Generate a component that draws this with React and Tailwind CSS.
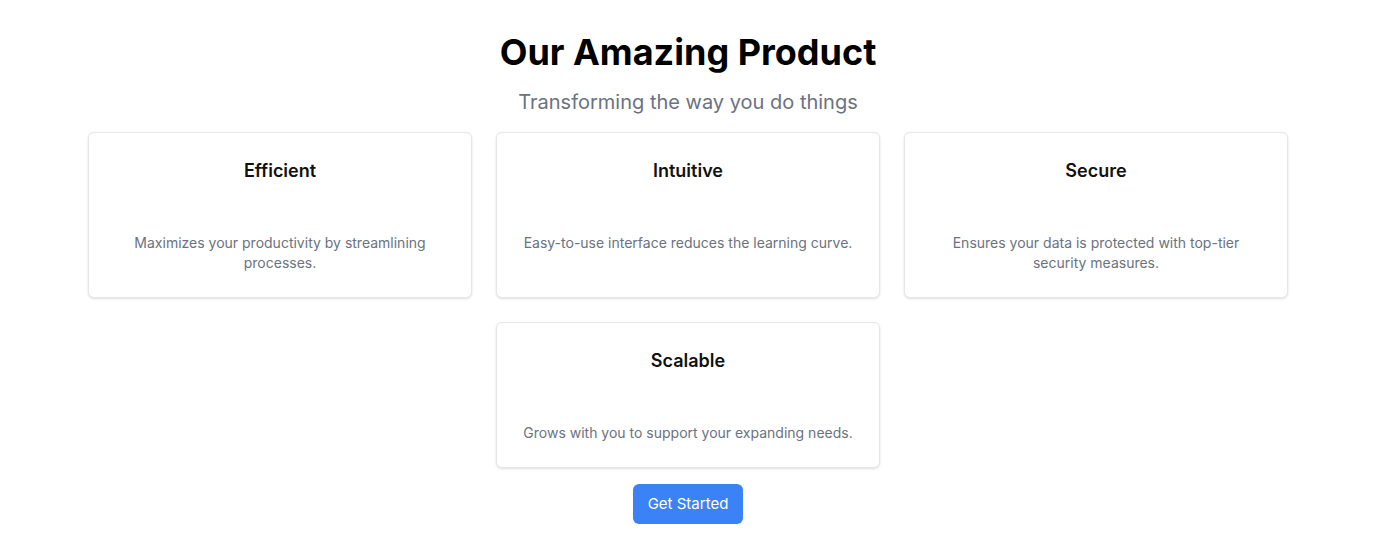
import React from 'react';

const features = [
  { title: 'Efficient', text: 'Maximizes your productivity by streamlining processes.' },
  { title: 'Intuitive', text: 'Easy-to-use interface reduces the learning curve.' },
  { title: 'Secure', text: 'Ensures your data is protected with top-tier security measures.' },
  { title: 'Scalable', text: 'Grows with you to support your expanding needs.' },
];

const FeatureCard = ({ title, text }) => {
  return (
    <div className="w-96 bg-white rounded-md border border-[#e5e7eb] shadow-sm p-6 text-center">
      <h3 className="text-lg font-semibold text-[#111111]">{title}</h3>
      <p className="mt-12 text-sm leading-5 text-[#6b7280]">{text}</p>
    </div>
  );
};

const App = () => {
  return (
    <div className="min-h-screen bg-white py-8 flex flex-col items-center" style={{ fontFamily: 'Inter, "Noto Sans", sans-serif' }}>
      <h1 className="text-4xl font-bold text-black">Our Amazing Product</h1>
      <p className="mt-4 mb-4 text-xl text-[#6b7280]">Transforming the way you do things</p>
      <div className="flex flex-wrap justify-center gap-6 max-w-[1200px]">
        {features.map((f) => (
          <FeatureCard key={f.title} title={f.title} text={f.text} />
        ))}
      </div>
      <button className="mt-4 px-[15px] py-2.5 text-[15px] leading-5 text-white bg-[#3b82f6] rounded-md">Get Started</button>
    </div>
  );
};

export default App;
